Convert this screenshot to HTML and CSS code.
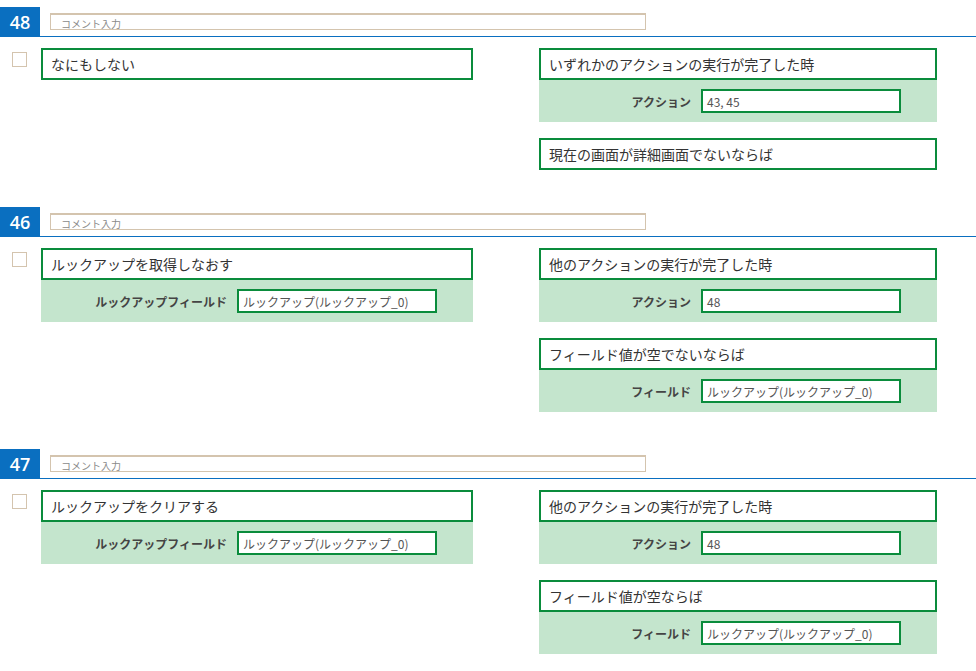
FILE: index.html
```html
<!DOCTYPE html>
<html lang="ja">
<head>
<meta charset="utf-8">
<link rel="stylesheet" href="styles.css">
</head>
<body>
<div class="section">
  <div class="head">
    <div class="badge">48</div>
    <div class="comment">コメント入力</div>
  </div>
  <div class="body">
    <div class="check"></div>
    <div class="col left">
      <div class="group"><div class="box">なにもしない</div></div>
    </div>
    <div class="col right">
      <div class="group">
        <div class="box">いずれかのアクションの実行が完了した時</div>
        <div class="panel"><span class="label">アクション</span><div class="field">43, 45</div></div>
      </div>
      <div class="group"><div class="box">現在の画面が詳細画面でないならば</div></div>
    </div>
  </div>
</div>

<div class="section">
  <div class="head">
    <div class="badge">46</div>
    <div class="comment">コメント入力</div>
  </div>
  <div class="body">
    <div class="check"></div>
    <div class="col left">
      <div class="group">
        <div class="box">ルックアップを取得しなおす</div>
        <div class="panel"><span class="label">ルックアップフィールド</span><div class="field">ルックアップ(ルックアップ_0)</div></div>
      </div>
    </div>
    <div class="col right">
      <div class="group">
        <div class="box">他のアクションの実行が完了した時</div>
        <div class="panel"><span class="label">アクション</span><div class="field">48</div></div>
      </div>
      <div class="group">
        <div class="box">フィールド値が空でないならば</div>
        <div class="panel"><span class="label">フィールド</span><div class="field">ルックアップ(ルックアップ_0)</div></div>
      </div>
    </div>
  </div>
</div>

<div class="section">
  <div class="head">
    <div class="badge">47</div>
    <div class="comment">コメント入力</div>
  </div>
  <div class="body">
    <div class="check"></div>
    <div class="col left">
      <div class="group">
        <div class="box">ルックアップをクリアする</div>
        <div class="panel"><span class="label">ルックアップフィールド</span><div class="field">ルックアップ(ルックアップ_0)</div></div>
      </div>
    </div>
    <div class="col right">
      <div class="group">
        <div class="box">他のアクションの実行が完了した時</div>
        <div class="panel"><span class="label">アクション</span><div class="field">48</div></div>
      </div>
      <div class="group">
        <div class="box">フィールド値が空ならば</div>
        <div class="panel"><span class="label">フィールド</span><div class="field">ルックアップ(ルックアップ_0)</div></div>
      </div>
    </div>
  </div>
</div>
</body>
</html>
```
FILE: styles.css
```css
html, body {
  margin: 0;
  padding: 0;
  background: #ffffff;
}
body {
  font-family: "Noto Sans CJK JP", "Noto Sans", sans-serif;
  color: #333333;
}
.section {
  padding-top: 7px;
  padding-bottom: 30px;
}
.head {
  display: flex;
  align-items: flex-start;
  border-bottom: 1px solid #0a6fc0;
  height: 29px;
}
.badge {
  width: 40px;
  height: 29px;
  background: #0a6fc0;
  color: #ffffff;
  font-family: "Open Sans", "Liberation Sans", sans-serif;
  font-weight: 600;
  font-size: 18px;
  line-height: 30px;
  text-align: center;
}
.comment {
  margin-left: 10px;
  margin-top: 6px;
  width: 596px;
  height: 17px;
  box-sizing: border-box;
  border: 1px solid #d4c4ae;
  border-top-width: 2px;
  font-size: 10px;
  line-height: 18px;
  color: #8a8a8a;
  padding-left: 10px;
  overflow: hidden;
}
.body {
  display: flex;
  align-items: flex-start;
  margin-top: 11px;
}
.check {
  width: 15px;
  height: 15px;
  box-sizing: border-box;
  border: 1px solid #d4c4ae;
  margin-left: 12px;
  margin-top: 4px;
}
.col {
  display: flex;
  flex-direction: column;
  gap: 16px;
}
.left {
  width: 432px;
  margin-left: 14px;
}
.right {
  width: 398px;
  margin-left: 66px;
}
.box {
  height: 32px;
  box-sizing: border-box;
  border: 2px solid #0a8c3c;
  padding-left: 8px;
  font-size: 14px;
  line-height: 29px;
  background: #ffffff;
  color: #333333;
}
.panel {
  height: 42px;
  background: #c4e5cd;
  display: flex;
  align-items: center;
  justify-content: flex-end;
  padding-right: 36px;
  gap: 10px;
}
.label {
  font-size: 12px;
  font-weight: 700;
  color: #444444;
}
.field {
  width: 200px;
  height: 24px;
  box-sizing: border-box;
  border: 2px solid #0a8c3c;
  background: #ffffff;
  font-size: 12px;
  line-height: 21px;
  padding-left: 4px;
  color: #555555;
}
```
